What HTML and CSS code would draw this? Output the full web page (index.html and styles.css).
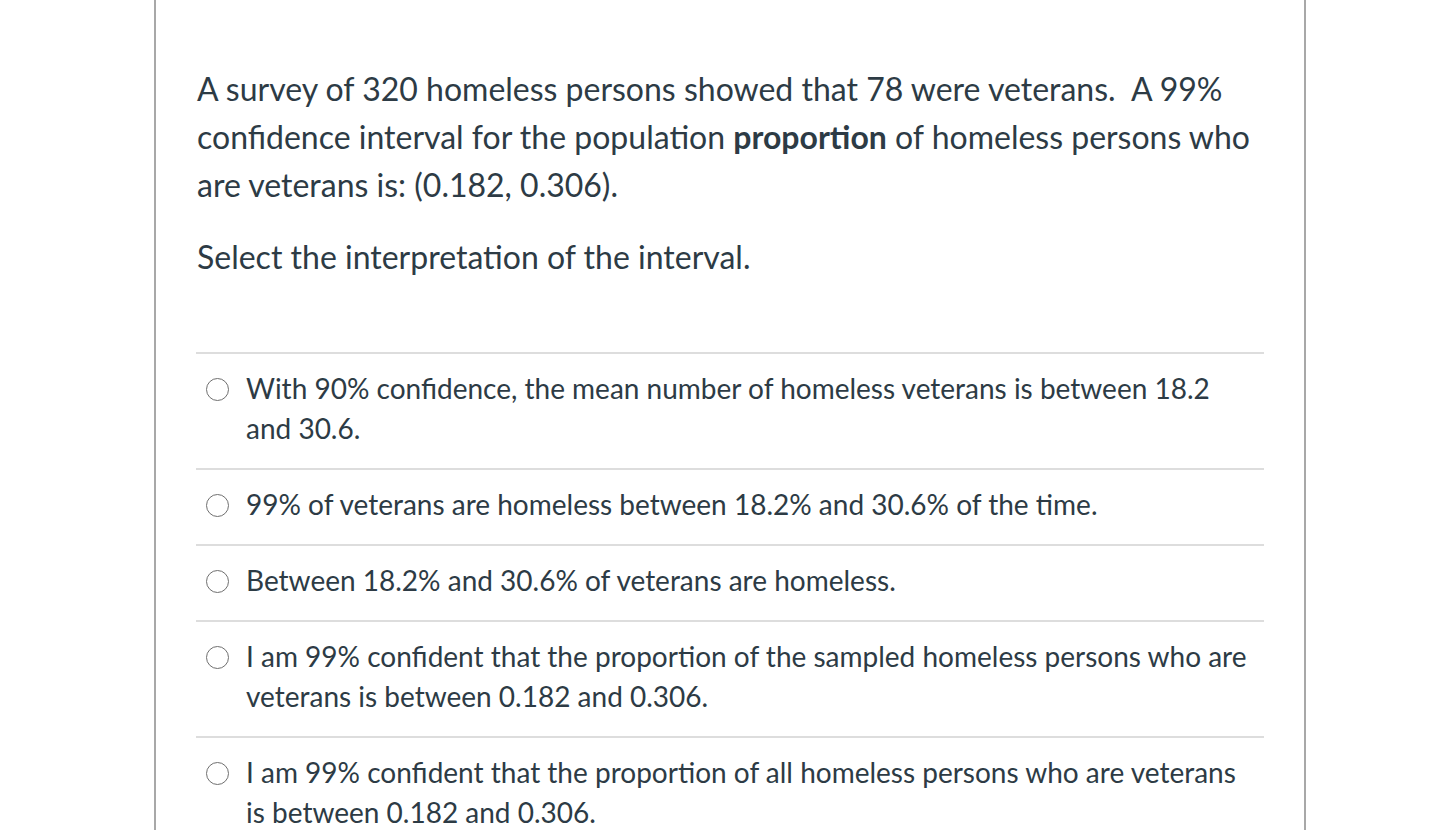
FILE: index.html
```html
<!DOCTYPE html>
<html>
<head>
<meta charset="utf-8">
<link rel="stylesheet" href="styles.css">
</head>
<body>
<div class="page">
  <div class="question">
    <div class="question-text">
      <p>A survey of 320 homeless persons showed that 78 were veterans.&nbsp; A 99% confidence interval for the population <strong>proportion</strong> of homeless persons who are veterans is: (0.182, 0.306).</p>
      <p>Select the interpretation of the interval.</p>
    </div>
    <div class="answers">
      <label class="answer"><span class="radio"></span><span class="answer-text">With 90% confidence, the mean number of homeless veterans is between 18.2 and 30.6.</span></label>
      <label class="answer"><span class="radio"></span><span class="answer-text">99% of veterans are homeless between 18.2% and 30.6% of the time.</span></label>
      <label class="answer"><span class="radio"></span><span class="answer-text">Between 18.2% and 30.6% of veterans are homeless.</span></label>
      <label class="answer"><span class="radio"></span><span class="answer-text">I am 99% confident that the proportion of the sampled homeless persons who are veterans is between 0.182 and 0.306.</span></label>
      <label class="answer"><span class="radio"></span><span class="answer-text">I am 99% confident that the proportion of all homeless persons who are veterans is between 0.182 and 0.306.</span></label>
    </div>
  </div>
</div>
</body>
</html>
```

FILE: styles.css
```css
html, body {
  margin: 0;
  padding: 0;
  background: #ffffff;
  height: 100%;
  overflow: hidden;
}

body {
  font-family: Lato, "Open Sans", sans-serif;
  color: #2d3b45;
}

.page {
  margin-left: 154px;
  width: 1148px;
  min-height: 830px;
  border-left: 2px solid #a8a8a8;
  border-right: 2px solid #a8a8a8;
}

.question {
  padding: 65px 40px 0 41px;
}

.question-text {
  font-size: 32px;
  line-height: 48px;
}

.question-text p {
  margin: 0 0 24px 0;
}

.question-text p:last-child {
  margin-bottom: 0;
}

.question-text strong {
  font-weight: 700;
}

.answers {
  margin-top: 71px;
  margin-left: -1px;
}

.answer {
  display: flex;
  align-items: flex-start;
  border-top: 2px solid #dddddd;
  padding: 14px 0 20px 0;
  font-size: 28px;
  line-height: 40px;
}

.radio {
  flex: none;
  width: 21px;
  height: 21px;
  border: 1.7px solid #6f6f6f;
  border-radius: 50%;
  margin: 10px 17px 0 10px;
}

.answer-text {
  flex: 1;
  padding-right: 10px;
}
```
